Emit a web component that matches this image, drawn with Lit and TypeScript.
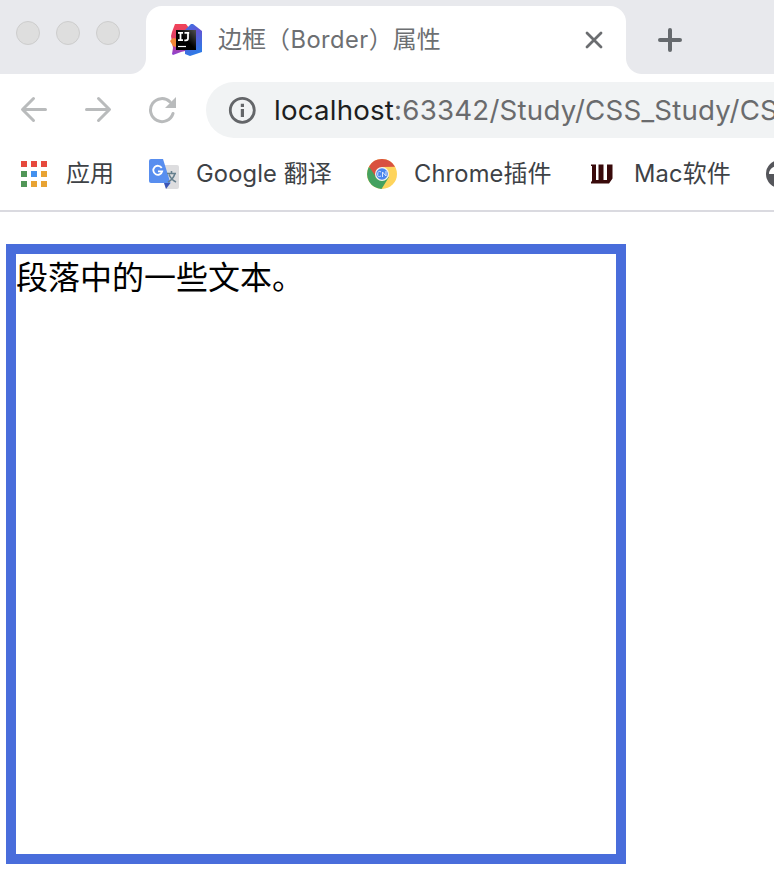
import { LitElement, html, css, svg } from "lit";
import { customElement } from "lit/decorators.js";

const dots = ["#e64a3d", "#e64a3d", "#e64a3d", "#519657", "#4490ee", "#e8a333", "#519657", "#e8a333", "#e8a333"];

@customElement("app-root")
export class AppRoot extends LitElement {
  static styles = css`
    :host { display: block; width: 774px; height: 888px; overflow: hidden; background: #fff;
      font-family: Inter, "Noto Sans CJK SC", sans-serif; }
    * { box-sizing: border-box; }
    svg { display: block; flex: none; }
    .strip { height: 74px; background: #e8e9ed; display: flex; align-items: flex-end; overflow: hidden; }
    .lights { width: 146px; height: 74px; padding: 21px 0 0 16px; display: flex; gap: 16px; }
    .light { width: 24px; height: 24px; border: 1px solid #cdcdcd; border-radius: 50%; background: #dedede; }
    .tab { position: relative; width: 480px; height: 68px; background: #fff; border-radius: 16px 16px 0 0;
      display: flex; align-items: center; padding: 0 23px 0 24px; }
    .tab::before, .tab::after { content: ""; position: absolute; bottom: 0; width: 16px; height: 16px; }
    .tab::before { left: -16px; background: radial-gradient(circle at 0 0, transparent 15.5px, #fff 16.5px); }
    .tab::after { right: -16px; background: radial-gradient(circle at 100% 0, transparent 15.5px, #fff 16.5px); }
    .title { margin-left: 16px; flex: 1; font-size: 24px; line-height: 36px; color: #6d6f72; white-space: nowrap; }
    .border { font-size: 23.7px; letter-spacing: 0.45px; margin-left: 0.5px; }
    .plus { margin: 0 0 22px 32px; }
    .toolbar { height: 72px; display: flex; align-items: center; padding-left: 20px; }
    .fwd { margin-left: 36px; }
    .reload { margin-left: 36px; }
    .omni { flex: 1; min-width: 0; margin-left: 28px; height: 56px; border-radius: 28px 0 0 28px; background: #f1f3f4;
      display: flex; align-items: center; padding-left: 22px; overflow: hidden; }
    .url { margin-left: 18px; white-space: nowrap; font-size: 27.7px; line-height: 40px; color: #6a6b6d; letter-spacing: 0.2px; }
    .host { color: #1d1e21; }
    .marks { height: 66px; border-bottom: 2px solid #dadae0; display: flex; align-items: center; padding: 0 0 8px 21px;
      font-size: 24px; line-height: 36px; color: #3e4246; white-space: nowrap; overflow: hidden; }
    .apps svg { width: 26px; height: 26px; }
    .lbl { flex: none; }
    .l1 { margin-left: 19px; width: 83px; }
    .l2 { margin-left: 17px; width: 171px; }
    .l3 { margin-left: 17px; width: 176px; }
    .l4 { margin-left: 20px; width: 132px; }
    .lat { font-size: 23.7px; letter-spacing: 0.15px; }
    .page { padding: 32px 0 0 6px; }
    .box { width: 620px; height: 620px; border: 10px solid #496ddb; color: #000;
      font-family: "Noto Sans CJK SC", sans-serif; font-size: 32px; line-height: 42px; }
    .box p { margin: 0; }
  `;

  render() {
    return html`
      <div class="strip">
        <div class="lights"><div class="light"></div><div class="light"></div><div class="light"></div></div>
        <div class="tab">
          <svg width="32" height="32" viewBox="0 0 32 32">
            <defs>
              <linearGradient id="r" x1="0" y1="0" x2="0" y2="1"><stop offset="0" stop-color="#f24358"/><stop offset=".45" stop-color="#dc3f68"/><stop offset="1" stop-color="#8b43d4"/></linearGradient>
              <linearGradient id="b" x1="0" y1="0" x2="0.3" y2="1"><stop offset="0" stop-color="#3778e8"/><stop offset=".4" stop-color="#6454d2"/><stop offset="1" stop-color="#2f79e6"/></linearGradient>
              <linearGradient id="k" x1="1" y1="0" x2="0" y2="1"><stop offset="0" stop-color="#505050"/><stop offset=".5" stop-color="#000"/></linearGradient>
            </defs>
            <path d="M5 0h11l3 4v22l-8 2-8 3-1-1 1-6-2-12 1-4z" fill="url(#r)"/>
            <path d="M0 17l3-3 5 1v9l-5-2z" fill="#f28635"/>
            <path d="M21 0h2l9 7v21l-12 4-5-2V6z" fill="url(#b)"/>
            <rect x="6" y="6" width="20" height="20" fill="url(#k)"/>
            <path d="M8 8.8h5M10.5 8.8v7.4M8 16.2h5M14.5 8.8h4.7M18 8.8v5.5q0 2-2 2h-1.7" fill="none" stroke="#fff" stroke-width="1.8"/>
            <path d="M8 22.5h8" stroke="#fff" stroke-width="1.2"/>
          </svg>
          <span class="title">边框（<span class="border">Border</span>）属性</span>
          <svg width="18" height="18" viewBox="0 0 18 18"><path d="M2 2l14 14M16 2L2 16" stroke="#6b6d70" stroke-width="2.8" stroke-linecap="round"/></svg>
        </div>
        <svg class="plus" width="24" height="24" viewBox="0 0 24 24"><path d="M12 2v20M2 12h20" stroke="#666a6e" stroke-width="4" stroke-linecap="round"/></svg>
      </div>
      <div class="toolbar">
        <svg width="28" height="28" viewBox="0 0 28 28"><path d="M25.5 13.5H3M13.5 2.5L2.5 13.5L13.5 24.5" fill="none" stroke="#b9bbbc" stroke-width="3" stroke-linecap="round" stroke-linejoin="round"/></svg>
        <svg class="fwd" width="28" height="28" viewBox="0 0 28 28"><path d="M2.5 13.5H25M14.5 2.5L25.5 13.5L14.5 24.5" fill="none" stroke="#b9bbbc" stroke-width="3" stroke-linecap="round" stroke-linejoin="round"/></svg>
        <svg class="reload" width="30" height="28" viewBox="0 0 30 28"><path d="M25 17.5A11.5 11.5 0 1 1 22 5.8" fill="none" stroke="#b9bbbc" stroke-width="3" stroke-linecap="round"/><path d="M28 1v11H17z" fill="#b9bbbc"/></svg>
        <div class="omni">
          <svg width="28" height="28" viewBox="0 0 28 28"><circle cx="14.3" cy="14.3" r="12" fill="none" stroke="#646669" stroke-width="2.8"/><path d="M12.8 7.8h3.2v3.2h-3.2zM12.8 13h3.2v8h-3.2z" fill="#646669"/></svg>
          <span class="url"><span class="host">localhost</span>:63342/Study/CSS_Study/CSS</span>
        </div>
      </div>
      <div class="marks">
        <div class="apps">
          <svg viewBox="0 0 26 26">${dots.map((c, i) => svg`<rect x=${(i % 3) * 10} y=${Math.floor(i / 3) * 10} width="6" height="6" fill=${c} />`)}</svg>
        </div>
        <span class="lbl l1">应用</span>
        <svg width="30" height="30" viewBox="0 0 30 30">
          <path d="M10 6h18q2 0 2 2v20q0 2-2 2H17z" fill="#dddddf"/>
          <path d="M15 24h6.5L17 30z" fill="#3b55b5"/>
          <path d="M2 0h12l7.5 24H2q-2 0-2-2V2q0-2 2-2z" fill="#588eef"/>
          <path d="M12.7 9A4.5 4.5 0 1 0 13.2 12.3H9" fill="none" stroke="#fff" stroke-width="1.8"/>
          <path d="M18 14.5h9M22.5 12V14.5M26 14.5q-2 6-7 8.5M20 15.5q2 5 7 7.5" fill="none" stroke="#657f8d" stroke-width="1.6"/>
        </svg>
        <span class="lbl l2"><span class="lat">Google</span> 翻译</span>
        <svg width="30" height="30" viewBox="0 0 30 30">
          <circle cx="15" cy="15" r="15" fill="#fed45c"/>
          <path d="M15 15L1.8 8A15 15 0 0 0 14.5 30L22 18z" fill="#44a160"/>
          <path d="M2 7.5A15 15 0 0 1 28 7.7L15 8L9 18z" fill="#d95140"/>
          <circle cx="15" cy="15" r="7" fill="#f6f5ef"/><circle cx="15" cy="15" r="5.8" fill="#4b87ee"/>
          <path d="M14 13q-3-2-3.3 2t3.3 2M15.5 18v-5l3.5 4v-5" fill="none" stroke="#dae6fc" stroke-width="1"/>
        </svg>
        <span class="lbl l3"><span class="lat">Chrome</span>插件</span>
        <svg width="24" height="20" viewBox="0 0 24 20"><path d="M1 0.5h5v15.5h2.5V0.5h5v15.5h3.5V0.5h5.5v14l-3.5 5H1V17.5h1V2H1z" fill="#390a0b"/></svg>
        <span class="lbl l4"><span class="lat">Mac</span>软件</span>
        <svg width="28" height="28" viewBox="0 0 28 28"><circle cx="14" cy="14" r="14" fill="#55565b"/><path d="M3 14q0-6 7-8v8z" fill="#fff"/></svg>
      </div>
      <div class="page"><div class="box"><p>段落中的一些文本。</p></div></div>
    `;
  }
}
